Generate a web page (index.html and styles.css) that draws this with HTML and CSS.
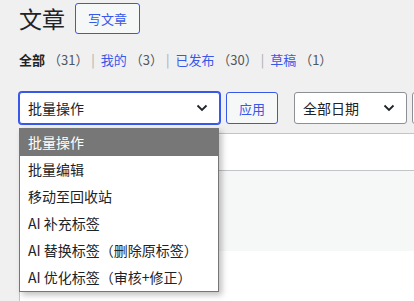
FILE: index.html
```html
<!DOCTYPE html>
<html lang="zh-CN">
  <head>
    <meta charset="UTF-8" />
    <title>文章</title>
    <link rel="stylesheet" href="styles.css">
  </head>
  <body>
    <div class="wrap">
      <div class="heading">
        <h1>文章</h1>
        <a class="page-action">写文章</a>
      </div>

      <ul class="subsubsub">
        <li><a class="current">全部 <span class="count">（31）</span></a> |</li>
        <li><a>我的 <span class="count">（3）</span></a> |</li>
        <li><a>已发布 <span class="count">（30）</span></a> |</li>
        <li><a>草稿 <span class="count">（1）</span></a></li>
      </ul>

      <div class="tablenav">
        <div class="select bulk focused">
          <span>批量操作</span>
          <svg class="chevron" width="12" height="8" viewBox="0 0 12 8"><polyline points="1.5,1.5 6,6 10.5,1.5" /></svg>
        </div>
        <button class="apply">应用</button>
        <div class="select date">
          <span>全部日期</span>
          <svg class="chevron" width="12" height="8" viewBox="0 0 12 8"><polyline points="1.5,1.5 6,6 10.5,1.5" /></svg>
        </div>
        <div class="select cat"></div>

        <!-- open list of the bulk actions select -->
        <ul class="options">
          <li class="selected">批量操作</li>
          <li>批量编辑</li>
          <li>移动至回收站</li>
          <li>AI 补充标签</li>
          <li>AI 替换标签（删除原标签）</li>
          <li>AI 优化标签（审核+修正）</li>
        </ul>
      </div>

      <div class="table">
        <div class="thead"></div>
        <div class="row alt"></div>
        <div class="row"></div>
      </div>
    </div>
  </body>
</html>
```

FILE: styles.css
```css
body {
  margin: 0;
  background-color: #f0f0f1;
  color: #1d2327;
  font-family: "Noto Sans CJK SC", "Noto Sans", sans-serif;
  overflow: hidden;
}
.wrap {
  padding: 3px 0 0 19px;
  width: 560px;
}
.heading {
  display: flex;
  align-items: center;
  gap: 10px;
  height: 31px;
}
h1 {
  margin: 0;
  font-size: 23px;
  font-weight: 400;
  line-height: 31px;
}
.page-action {
  box-sizing: border-box;
  height: 31px;
  line-height: 29px;
  padding: 0 12px;
  font-size: 13px;
  color: #3858e9;
  background-color: #f6f7f7;
  border: 1px solid #3858e9;
  border-radius: 3px;
}
.subsubsub {
  list-style: none;
  margin: 16px 0 0;
  padding: 0;
  display: flex;
  font-size: 13px;
  line-height: 20px;
  color: #a7aaad;
  white-space: pre;
}
.subsubsub li {
  margin-right: 6px;
}
.subsubsub a {
  color: #3858e9;
}
.subsubsub a.current {
  color: #1d2327;
  font-weight: 700;
}
.subsubsub .count {
  color: #50575e;
  font-weight: 400;
}
.tablenav {
  position: relative;
  display: flex;
  margin-top: 22px;
  height: 32px;
}
.select {
  box-sizing: border-box;
  height: 32px;
  display: flex;
  align-items: center;
  justify-content: space-between;
  padding: 0 11px 0 8px;
  font-size: 14px;
  background-color: #fff;
  border: 1px solid #8c8f94;
  border-radius: 3px;
  flex-shrink: 0;
}
.select.focused {
  border-color: #3858e9;
  box-shadow: 0 0 0 1px #3858e9;
}
.chevron polyline {
  fill: none;
  stroke: #1d2327;
  stroke-width: 1.8;
}
.bulk {
  width: 201px;
}
.apply {
  box-sizing: border-box;
  margin-left: 6px;
  width: 52px;
  height: 32px;
  padding: 0;
  font-family: inherit;
  font-size: 13px;
  color: #3858e9;
  background-color: #f6f7f7;
  border: 1px solid #3858e9;
  border-radius: 3px;
}
.date {
  margin-left: 16px;
  width: 113px;
}
.cat {
  margin-left: 5px;
  width: 120px;
}
.options {
  position: absolute;
  left: 0;
  top: 36px;
  z-index: 2;
  box-sizing: border-box;
  width: 200px;
  margin: 0;
  padding: 0;
  list-style: none;
  background-color: #fff;
  border: 1px solid #767676;
  box-shadow: 3px 3px 6px rgba(0, 0, 0, 0.25);
  font-size: 14px;
}
.options li {
  height: 27px;
  line-height: 27px;
  padding-left: 8px;
  white-space: nowrap;
}
.options li.selected {
  background-color: #777;
  color: #fff;
}
.table {
  margin-top: 9px;
  background-color: #fff;
  border: 1px solid #c3c4c7;
  border-right: none;
}
.thead {
  height: 36px;
  border-bottom: 1px solid #c3c4c7;
}
.row {
  height: 80px;
}
.row.alt {
  background-color: #f6f7f7;
}
```
